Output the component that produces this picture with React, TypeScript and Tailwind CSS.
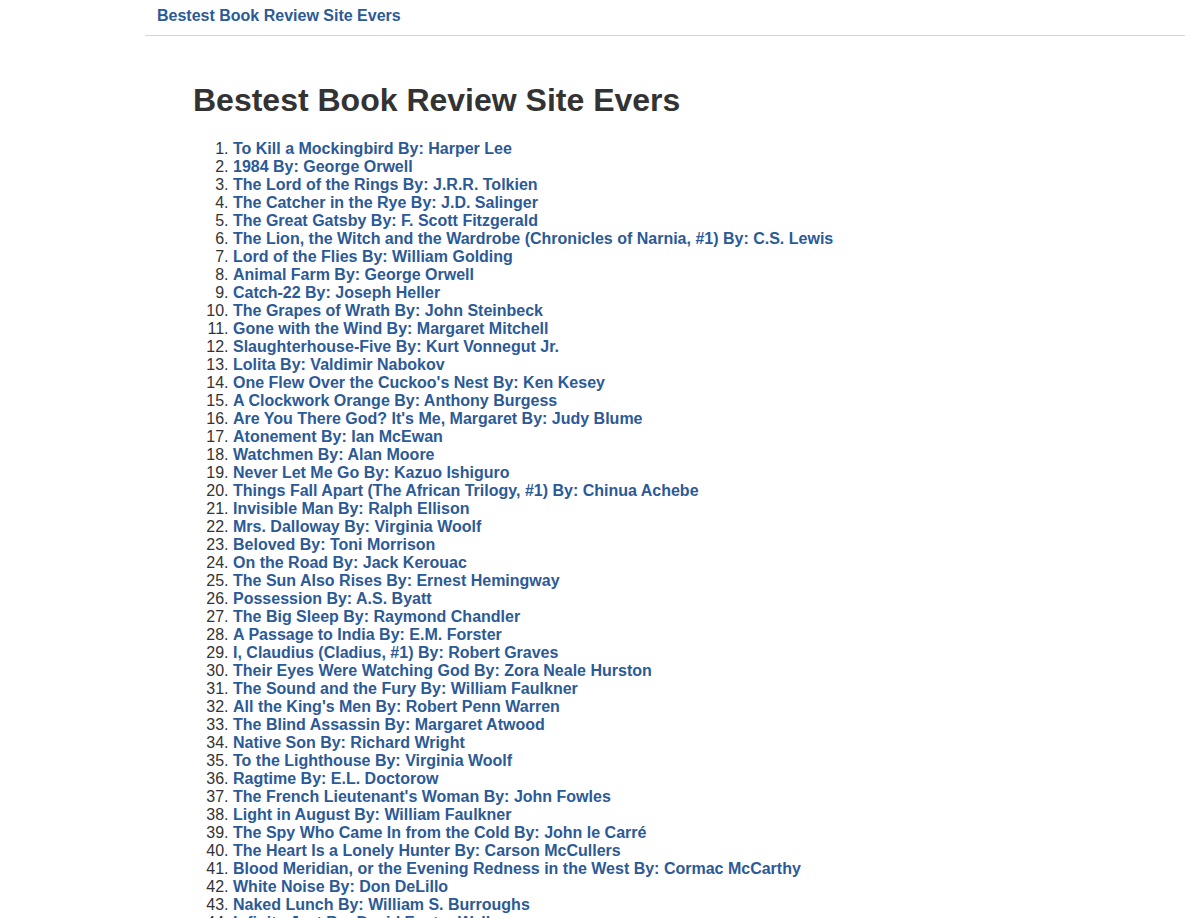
const books = [
  'To Kill a Mockingbird By: Harper Lee',
  '1984 By: George Orwell',
  'The Lord of the Rings By: J.R.R. Tolkien',
  'The Catcher in the Rye By: J.D. Salinger',
  'The Great Gatsby By: F. Scott Fitzgerald',
  'The Lion, the Witch and the Wardrobe (Chronicles of Narnia, #1) By: C.S. Lewis',
  'Lord of the Flies By: William Golding',
  'Animal Farm By: George Orwell',
  'Catch-22 By: Joseph Heller',
  'The Grapes of Wrath By: John Steinbeck',
  'Gone with the Wind By: Margaret Mitchell',
  'Slaughterhouse-Five By: Kurt Vonnegut Jr.',
  'Lolita By: Valdimir Nabokov',
  "One Flew Over the Cuckoo's Nest By: Ken Kesey",
  'A Clockwork Orange By: Anthony Burgess',
  "Are You There God? It's Me, Margaret By: Judy Blume",
  'Atonement By: Ian McEwan',
  'Watchmen By: Alan Moore',
  'Never Let Me Go By: Kazuo Ishiguro',
  'Things Fall Apart (The African Trilogy, #1) By: Chinua Achebe',
  'Invisible Man By: Ralph Ellison',
  'Mrs. Dalloway By: Virginia Woolf',
  'Beloved By: Toni Morrison',
  'On the Road By: Jack Kerouac',
  'The Sun Also Rises By: Ernest Hemingway',
  'Possession By: A.S. Byatt',
  'The Big Sleep By: Raymond Chandler',
  'A Passage to India By: E.M. Forster',
  'I, Claudius (Cladius, #1) By: Robert Graves',
  'Their Eyes Were Watching God By: Zora Neale Hurston',
  'The Sound and the Fury By: William Faulkner',
  "All the King's Men By: Robert Penn Warren",
  'The Blind Assassin By: Margaret Atwood',
  'Native Son By: Richard Wright',
  'To the Lighthouse By: Virginia Woolf',
  'Ragtime By: E.L. Doctorow',
  "The French Lieutenant's Woman By: John Fowles",
  'Light in August By: William Faulkner',
  'The Spy Who Came In from the Cold By: John le Carré',
  'The Heart Is a Lonely Hunter By: Carson McCullers',
  'Blood Meridian, or the Evening Redness in the West By: Cormac McCarthy',
  'White Noise By: Don DeLillo',
  'Naked Lunch By: William S. Burroughs',
  'Infinite Jest By: David Foster Wallace',
  'Brave New World By: Aldous Huxley',
  'Rebecca By: Daphne du Maurier',
];

export default function App() {
  return (
    <div className="min-h-screen bg-white text-[#333] font-['Liberation_Sans',Arial,sans-serif] text-[16px] leading-[18px]">
      {/* Navbar */}
      <nav className="ml-[145px] h-[36px] border-b border-[#d6d6d6]">
        <a href="#" className="block pl-[12px] pt-[6px] leading-[20px] font-bold text-[#2c5a96]">
          Bestest Book Review Site Evers
        </a>
      </nav>

      {/* Content */}
      <div className="ml-[193px]">
        <h1 className="mt-[47px] mb-[22px] text-[32px] leading-[35px] font-bold text-[#333]">
          Bestest Book Review Site Evers
        </h1>
        <ol className="list-decimal pl-[40px]">
          {books.map((b) => (
            <li key={b}>
              <a href="#" className="font-bold text-[#2c5a96]">
                {b}
              </a>
            </li>
          ))}
        </ol>
      </div>
    </div>
  );
}
